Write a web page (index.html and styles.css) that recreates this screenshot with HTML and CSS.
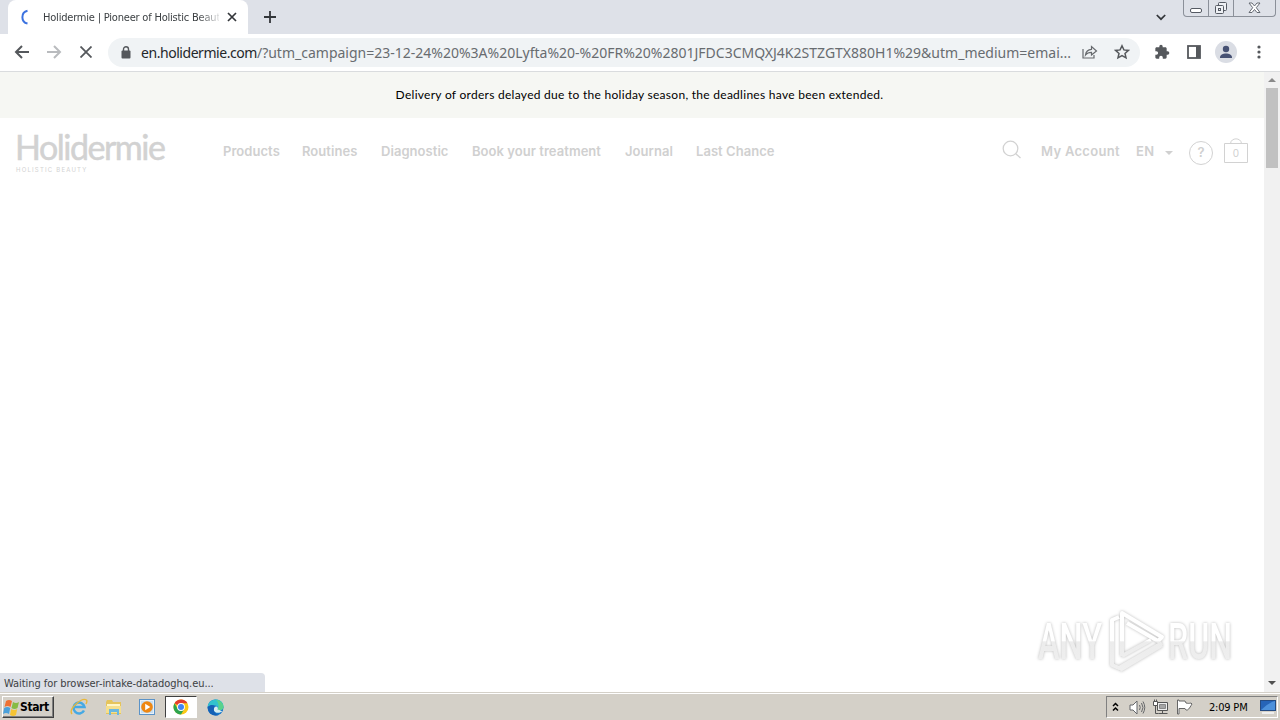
FILE: index.html
```
<!DOCTYPE html>
<html lang="en">
<head>
    <meta charset="utf-8">
    <title>Holidermie | Pioneer of Holistic Beauty</title>
    <link rel="stylesheet" href="styles.css">
</head>
<body>
    <div class="tabstrip">
        <div class="tab">
            <svg class="spinner" width="16" height="16" viewBox="0 0 16 16"><path d="M8.500 1.800A6.500 6.500 0 0 0 8.500 14.500" fill="none" stroke="#3b72e0" stroke-width="2"/></svg>
            <span class="tab-title">Holidermie | Pioneer of Holistic Beauty</span>
            <svg class="tab-close" width="10" height="10" viewBox="0 0 10 10"><path d="M1 1l8 8M9 1L1 9" stroke="#33363a" stroke-width="1.7"/></svg>
        </div>
        <svg class="new-tab" width="12" height="12" viewBox="0 0 12 12"><path d="M6 0v12M0 6h12" stroke="#33363a" stroke-width="1.8"/></svg>
        <svg class="tab-search" width="10" height="7" viewBox="0 0 10 7"><path d="M.8 1L5 5.2 9.2 1" fill="none" stroke="#33363a" stroke-width="1.7"/></svg>
        <div class="window-buttons">
            <span class="min"><svg width="13" height="6"><rect x=".5" y=".5" width="11" height="4" rx="1.5" fill="#fff" stroke="#555a63"/></svg></span>
            <span class="restore"><svg width="14" height="14" fill="#eef0f4" stroke="#555a63"><rect x="4.500" y="1.500" width="8" height="8" rx="1"/><rect x="1.500" y="4.500" width="8" height="8" rx="1"/><rect x="4.500" y="7.500" width="2" height="2"/></svg></span>
            <span class="close"><svg width="13" height="12"><path d="M1 1h3l2.500 3L9 1h3L8.300 5.700 12 10.500H9L6.500 7.500 4 10.500H1l3.700-4.800z" fill="#fff" stroke="#656a73"/></svg></span>
        </div>
    </div>

    <div class="toolbar">
        <svg class="back" width="16" height="14" viewBox="0 0 16 14" fill="none" stroke="#55585c" stroke-width="2"><path d="M15 7H2M8 1L2 7l6 6"/></svg>
        <svg class="forward" width="16" height="14" viewBox="0 0 16 14" fill="none" stroke="#b9bbbe" stroke-width="2"><path d="M0 7h13M7 1l6 6-6 6"/></svg>
        <svg class="stop" width="12" height="12" viewBox="0 0 12 12"><path d="M.5.5l11 11M11.500.5l-11 11" stroke="#55585c" stroke-width="1.800"/></svg>
        <div class="omnibox">
            <svg class="lock" width="10" height="13" viewBox="0 0 10 13"><rect x="0.500" y="4.500" width="9" height="8" rx="1" fill="#55585c"/><path d="M2.500 5V3.200a2.500 2.500 0 0 1 5 0V5" fill="none" stroke="#55585c" stroke-width="1.400"/></svg>
            <span class="url"><b>en.holidermie.com</b>/?utm_campaign=23-12-24%20%3A%20Lyfta%20-%20FR%20%2801JFDC3CMQXJ4K2STZGTX880H1%29&amp;utm_medium=emai...</span>
            <svg class="share" width="16" height="14" viewBox="0 0 16 14" fill="none" stroke="#66696d" stroke-width="1.200"><path d="M1 4v9h11v-3M3.500 10C4 6 6 4.500 9.500 4.300V1.500L14.500 6 9.500 10V7.300C7 7.300 5 8 3.500 10z"/></svg>
            <svg class="star" width="16" height="16" viewBox="0 0 16 16"><path d="M8 1.800l1.900 4.100 4.500.5-3.400 3 1 4.400L8 11.500l-4 2.300 1-4.400-3.400-3 4.500-.5z" fill="none" stroke="#55585c" stroke-width="1.500"/></svg>
        </div>
        <svg class="puzzle" width="16" height="16" viewBox="0 0 24 24"><path fill="#55585c" d="M20.500 11H19V7c0-1.100-.9-2-2-2h-4V3.500a2.500 2.500 0 0 0-5 0V5H4c-1.100 0-2 .9-2 2v3.800h1.500a2.700 2.700 0 0 1 0 5.400H2V20c0 1.100.9 2 2 2h3.800v-1.500a2.700 2.700 0 0 1 5.400 0V22H17c1.100 0 2-.9 2-2v-4h1.500a2.500 2.500 0 0 0 0-5z"/></svg>
        <svg class="panel" width="14" height="14" viewBox="0 0 14 14"><rect x="1" y="1" width="12" height="12" fill="none" stroke="#55585c" stroke-width="1.800"/><path d="M9 1h4v12H9z" fill="#55585c"/></svg>
        <svg class="avatar" width="22" height="22" viewBox="0 0 22 22"><circle cx="11" cy="11" r="11" fill="#dadde4"/><circle cx="11" cy="8" r="3.200" fill="#465173"/><path d="M5 16.500c0-5.300 12-5.300 12 0v.5H5z" fill="#465173"/></svg>
        <svg class="more" width="4" height="14" viewBox="0 0 4 14" fill="#55585c"><circle cx="2" cy="2" r="1.600"/><circle cx="2" cy="7" r="1.600"/><circle cx="2" cy="12" r="1.600"/></svg>
    </div>

    <div class="viewport">
        <div class="page">
            <div class="banner"><span>Delivery of orders delayed due to the holiday season, the deadlines have been extended.</span></div>
            <header>
                <div class="logo">
                    <div class="logo-name">Holidermie</div>
                    <div class="logo-sub">HOLISTIC BEAUTY</div>
                </div>
                <nav>
                    <a class="products">Products</a>
                    <a class="routines">Routines</a>
                    <a class="diagnostic">Diagnostic</a>
                    <a class="book">Book your treatment</a>
                    <a class="journal">Journal</a>
                    <a class="chance">Last Chance</a>
                </nav>
                <div class="tools">
                    <svg class="search" width="20" height="20" viewBox="0 0 20 20" fill="none" stroke="#d2d2d2" stroke-width="1.300"><circle cx="8.500" cy="8.500" r="7.300"/><path d="M13.800 13.800l4.700 4.200"/></svg>
                    <a class="account">My Account</a>
                    <a class="lang">EN</a>
                    <span class="caret"></span>
                    <span class="help">?</span>
                    <span class="bag"><svg width="24" height="26" viewBox="0 0 24 26" fill="none" stroke="#d2d2d2"><path d="M.5 5.500h23v19H.5zM6.500 5.500C7-.7 17-.7 17.500 5.500"/></svg><i>0</i></span>
                </div>
            </header>
        </div>
        <div class="scrollbar">
            <span class="arrow-up"></span>
            <span class="thumb"></span>
            <span class="arrow-down"></span>
        </div>
        <svg class="watermark" width="204" height="74" viewBox="0 0 204 74">
            <defs>
                <linearGradient id="fade" x1="0" y1="0" x2="0" y2="74" gradientUnits="userSpaceOnUse">
                    <stop offset=".48" stop-color="#fff"/>
                    <stop offset=".5" stop-color="#ececec"/>
                    <stop offset="1" stop-color="#f1f1f1"/>
                </linearGradient>
            </defs>
            <g class="mark-text" fill="url(#fade)">
                <text x="4" y="54" textLength="64" lengthAdjust="spacingAndGlyphs">ANY</text>
                <text x="134" y="54" textLength="64" lengthAdjust="spacingAndGlyphs">RUN</text>
            </g>
            <g class="mark-logo" fill="none" stroke="url(#fade)" stroke-width="4" stroke-linejoin="round">
                <path d="M88 51V8l40 24-4 4-31-18"/>
                <path d="M85 12l-7 3v45l7 3 43-25"/>
                <path d="M88 51l29-16M86 65l42-25"/>
            </g>
        </svg>
        <div class="status">Waiting for browser-intake-datadoghq.eu...</div>
    </div>

    <div class="taskbar">
        <div class="start">
            <svg width="17" height="17" viewBox="0 0 17 17"><path d="M3 2q3-2 6 0L7.500 8q-3-2-6 0z" fill="#ee7134"/><path d="M10 3q3 2 6 0l-1.500 6q-3 2-6 0z" fill="#86bb45"/><path d="M1.200 9q3-2 6 0L6 15q-3-2-6 0z" fill="#4ba0da"/><path d="M8.200 10q3 2 6 0L13 16q-3 2-6 0z" fill="#f6c433"/></svg>
            <span>Start</span>
        </div>
        <div class="apps">
            <span><svg width="18" height="18" viewBox="0 0 18 18" fill="none"><path d="M14 12.500A5.500 5.500 0 1 1 14.500 9H5" stroke="#45a9e4" stroke-width="2.500"/><path d="M2 16C-2 11 12-1 16.500 2c1 1 .5 2-.5 4" stroke="#e9b83a" stroke-width="1.400"/></svg></span>
            <span><svg width="17" height="17" viewBox="0 0 17 17"><path d="M1 3l1-2h5l1 2h8v12H1z" fill="#e5c45c"/><path d="M2 5h13v3H2z" fill="#fff6c8"/><path d="M1 7h15v7H1z" fill="#f5df8c"/><path d="M4 16v-6h10v6h-2v-3H6v3z" fill="#6bb8e0"/></svg></span>
            <span><svg width="16" height="16" viewBox="0 0 16 16"><rect x=".5" y=".5" width="15" height="15" fill="#e7f0f8" stroke="#5b93c8"/><rect x="2" y="2" width="12" height="12" fill="#c6def2"/><circle cx="8" cy="8" r="5.800" fill="#ee8712"/><path d="M6.200 4.800v6.400L11.300 8z" fill="#fff"/></svg></span>
            <span class="active"><svg width="16" height="16" viewBox="0 0 16 16"><circle cx="8" cy="8" r="7.500" fill="#fbc816"/><path d="M8 8L1.500 4.250A7.500 7.500 0 0 1 14.500 4.250H8z" fill="#e33e2f"/><path d="M1.500 4.250A7.500 7.500 0 0 0 8 15.500L11.250 9.900 4.750 9.900z" fill="#2da44e"/><circle cx="8" cy="8" r="3.900" fill="#fff"/><circle cx="8" cy="8" r="3" fill="#4285f4"/></svg></span>
            <span><svg width="17" height="17" viewBox="0 0 17 17"><circle cx="8.500" cy="8.500" r="8" fill="#1876cb"/><path d="M.7 8C1.500-1.500 16-2 16.500 7.500c0 4-5 4.500-6 3 2.500-4-4-6-9.800-2.500z" fill="#32c3ce"/><path d="M9 1c5 0 7.500 4 7.500 7 0 3.500-5 4-6 2.500C13 7 11 3 9 1z" fill="#5bd28b"/><path d="M7 8c-2 4 2 7.500 7 5l1.500-.5-3-1.500-2-.5c1-1 0-3-1-3z" fill="#d8eef0"/><path d="M.7 8c3-3 7-2 7 0-2.500 3.500 1 8 4 8C6 18 .5 14 .7 8z" fill="#1661b5"/></svg></span>
        </div>
        <div class="tray">
            <svg class="chevrons" width="7" height="10" viewBox="0 0 7 10" fill="none" stroke="#000" stroke-width="1.500"><path d="M1 4l2.500-2.500L6 4M1 8.500L3.500 6 6 8.500"/></svg>
            <svg class="sound" width="17" height="15" viewBox="0 0 17 15" fill="none" stroke="#65676a"><path d="M1 5h3l4-4v13l-4-4H1z" fill="#fff"/><path d="M10.500 5q1.500 2.500 0 5M12.500 3q3 4.500 0 9M14 1.500q3.500 6 0 12"/></svg>
            <svg class="network" width="17" height="16" viewBox="0 0 17 16" stroke="#555"><path d="M5.500 3.500h10v8h-10z" fill="#eee"/><path d="M7.500 5.500h6v4h-6z" fill="#a5a5a5" stroke="#888"/><path d="M10.500 11.500v3M6.500 14.500h9" fill="none"/><path d="M3.500 6.500v8h3M2.500.5v2M4.500.5v2" fill="none"/><path d="M1.500 2.500h4v4h-4z" fill="#fff"/></svg>
            <svg class="flag" width="17" height="16" viewBox="0 0 17 16" fill="#fff" stroke="#666"><path d="M1.500 1v14H3V9.500h6l1 1.500c2 .5 3-1 6-6l-1-1c-2 .5-3 .5-5 0L9 2H3V1z"/></svg>
            <span class="clock">2:09 PM</span>
            <svg class="desktop" width="16" height="14" viewBox="0 0 16 14"><rect x=".5" y=".5" width="15" height="10" fill="#2664b8" stroke="#254b82"/><path d="M1 10Q8 3 15 1v9z" fill="#4d91dc"/><path d="M2 13h12" stroke="#eee" stroke-width="2"/></svg>
        </div>
    </div>
</body>
</html>
```

FILE: styles.css
```
* {
    box-sizing: border-box;
}
body {
    margin: 0;
    width: 1280px;
    height: 720px;
    overflow: hidden;
    display: flex;
    flex-direction: column;
    font-family: "Noto Sans", sans-serif;
    background: #fff;
    white-space: nowrap;
}
svg {
    display: block;
    flex: none;
}

/* browser tabs */
.tabstrip {
    height: 34px;
    flex: none;
    display: flex;
    align-items: center;
    background: #dee1e8;
    padding-left: 8px;
}
.tab {
    width: 240px;
    height: 34px;
    display: flex;
    align-items: center;
    padding: 0 11px;
    background: #fff;
    border-radius: 8px 8px 0 0;
}
.tab-title {
    width: 176px;
    margin-left: 8px;
    overflow: hidden;
    font-family: "DejaVu Sans Condensed", "DejaVu Sans", sans-serif;
    font-size: 11px;
    letter-spacing: -0.2px;
    color: #3c4043;
    -webkit-mask-image: linear-gradient(to right, #000 155px, transparent 180px);
}
.tab-close {
    margin-left: 8px;
}
.new-tab {
    margin-left: 16px;
}
.tab-search {
    margin-left: 880px;
}
.window-buttons {
    display: flex;
    align-self: flex-start;
    width: 93px;
    height: 17px;
    margin-left: 17px;
    border: 1px solid #8b9099;
    border-top: none;
    border-radius: 0 0 4px 4px;
}
.window-buttons span {
    display: flex;
    justify-content: center;
    align-items: center;
    border-right: 1px solid #8b9099;
}
.window-buttons .min {
    width: 25px;
    padding-top: 5px;
}
.window-buttons .restore {
    width: 25px;
}
.window-buttons .close {
    width: 41px;
    border-right: none;
}

/* address row */
.toolbar {
    height: 38px;
    flex: none;
    display: flex;
    align-items: center;
    padding-left: 14px;
    padding-bottom: 1px;
    background: #fff;
    border-bottom: 1px solid #dadcde;
}
.forward {
    margin-left: 17px;
}
.stop {
    margin-left: 17px;
}
.omnibox {
    width: 1032px;
    height: 29px;
    margin-left: 16px;
    padding-left: 13px;
    border-radius: 15px;
    background: #f0f3f5;
    display: flex;
    align-items: center;
}
.url {
    width: 931px;
    margin-left: 10px;
    font-family: "Noto Sans", sans-serif;
    font-size: 14px;
    color: #686c70;
}
.url b {
    font-weight: normal;
    letter-spacing: -0.45px;
    color: #24272a;
}
.share {
    margin-left: 10px;
}
.star {
    margin-left: 16px;
}
.puzzle {
    margin-left: 14px;
}
.panel {
    margin-left: 17px;
}
.avatar {
    margin-left: 14px;
}
.more {
    margin-left: 20px;
}

/* site */
.viewport {
    position: relative;
    height: 620px;
    flex: none;
    display: flex;
}
.page {
    width: 1264px;
}
.banner {
    height: 46px;
    padding-left: 15px;
    background: #f6f7f3;
    text-align: center;
    font-family: Lato, sans-serif;
    font-size: 12px;
    line-height: 46px;
    letter-spacing: 0.28px;
    color: #000;
}
header {
    display: flex;
    height: 66px;
    padding-left: 16px;
    font-family: Inter, sans-serif;
    font-size: 13px;
    font-weight: 600;
    letter-spacing: 0.05px;
    color: #d0d0d0;
}
.logo {
    width: 207px;
    padding-top: 10px;
    color: #d2d2d2;
    font-weight: 400;
}
.logo-name {
    margin-left: -1px;
    font-family: Lato, sans-serif;
    font-size: 34px;
    line-height: 38px;
    letter-spacing: -1.5px;
    -webkit-text-stroke: 0.5px #d2d2d2;
}
.logo-sub {
    font-size: 6px;
    line-height: 7px;
    letter-spacing: 1.2px;
}
nav {
    display: flex;
    width: 779px;
    padding-top: 25px;
    line-height: 16px;
}
nav .products, nav .routines {
    width: 79px;
}
nav .diagnostic {
    width: 91px;
}
nav .book {
    width: 153px;
}
nav .journal {
    width: 71px;
}
.tools {
    display: flex;
    padding-top: 25px;
    line-height: 16px;
}
.search {
    margin-top: -3px;
}
.account {
    width: 79px;
    margin-left: 19px;
    letter-spacing: 0.3px;
}
.lang {
    width: 19px;
    margin-left: 16px;
    letter-spacing: 0.3px;
}
.caret {
    height: 4px;
    margin: 8px 0 0 10px;
    border: 4px solid transparent;
    border-top-color: #d0d0d0;
    border-bottom: none;
}
.help {
    width: 24px;
    height: 24px;
    margin: -2px 0 0 16px;
    border: 1px solid #d2d2d2;
    border-radius: 50%;
    text-align: center;
    line-height: 20px;
}
.bag {
    position: relative;
    width: 24px;
    height: 26px;
    margin: -5px 0 0 11px;
}
.bag i {
    position: absolute;
    left: 0;
    top: 7px;
    width: 24px;
    text-align: center;
    font-size: 10px;
    font-style: normal;
    font-weight: 400;
}
.scrollbar {
    width: 16px;
    display: flex;
    flex-direction: column;
    align-items: center;
    background: #f1f1f1;
}
.arrow-up {
    margin: 6px 0;
    border: 4px solid transparent;
    border-top: none;
    border-bottom-color: #8a8a8a;
}
.thumb {
    width: 12px;
    height: 80px;
    background: #c1c1c1;
}
.arrow-down {
    margin: auto 0 7px;
    border: 4px solid transparent;
    border-bottom: none;
    border-top-color: #505050;
}
.watermark {
    position: absolute;
    left: 1034px;
    top: 533px;
    filter: drop-shadow(0 0 1.5px #bbb);
}
.mark-text {
    font-family: Roboto, sans-serif;
    font-size: 50px;
    font-weight: 500;
}
.status {
    position: absolute;
    left: 0;
    bottom: 0;
    width: 265px;
    height: 19px;
    padding-left: 4px;
    border-radius: 0 4px 0 0;
    background: #dee1e8;
    font-family: "DejaVu Sans Condensed", "DejaVu Sans", sans-serif;
    font-size: 11px;
    line-height: 21px;
    letter-spacing: -0.05px;
    color: #3c4043;
}

/* taskbar */
.taskbar {
    height: 28px;
    flex: none;
    display: flex;
    align-items: center;
    padding: 1px 2px 0;
    background: #d4d0c8;
    border-top: 1px solid #d4d0c8;
    box-shadow: inset 0 1px #fff;
}
.start {
    width: 52px;
    height: 22px;
    display: flex;
    align-items: center;
    border: 1px solid;
    border-color: #fff #404040 #404040 #fff;
    box-shadow: inset -1px -1px #808080;
    font-family: "DejaVu Sans Condensed", sans-serif;
    font-size: 12px;
    font-weight: bold;
    letter-spacing: -0.4px;
    color: #000;
}
.apps {
    display: flex;
    margin-left: 9px;
}
.apps span {
    width: 32px;
    height: 22px;
    margin-right: 2px;
    display: flex;
    justify-content: center;
    align-items: center;
}
.apps .active {
    background: #fff;
    border: 1px solid;
    border-color: #404040 #fff #fff #404040;
}
.tray {
    width: 172px;
    height: 22px;
    margin-left: auto;
    display: flex;
    align-items: center;
    padding-left: 5px;
    border: 1px solid;
    border-color: #808080 #fff #fff #808080;
}
.sound {
    margin-left: 10px;
}
.network {
    margin-left: 6px;
}
.flag {
    margin-left: 7px;
}
.clock {
    width: 42px;
    margin-left: 16px;
    font-family: "DejaVu Sans Condensed", sans-serif;
    font-size: 11px;
    letter-spacing: -0.2px;
    color: #000;
}
.desktop {
    margin-left: 9px;
}
```
